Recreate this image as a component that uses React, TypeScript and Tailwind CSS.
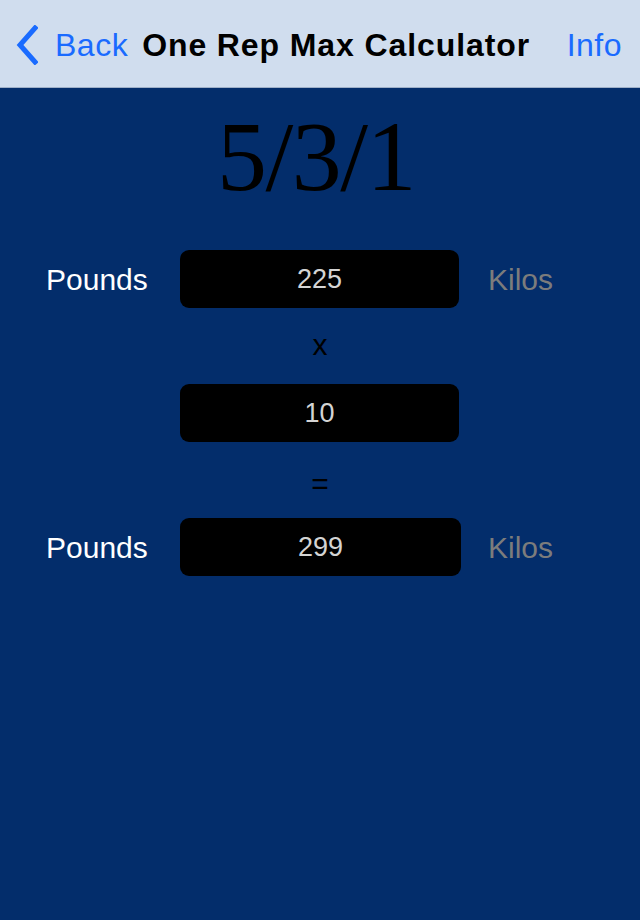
export default function App() {
  const font = { fontFamily: '"Liberation Sans", Arial, sans-serif' };
  return (
    <div className="flex h-[920px] w-[640px] flex-col bg-[#032d6b]" style={font}>
      <header className="flex h-[88px] shrink-0 items-center border-b border-[#9fb0c8] bg-[#d0ddee] pl-[16px] pr-[18px] pt-[3px]">
        <svg viewBox="0 0 22 40" className="h-[40px] w-[22px]" fill="none" stroke="#1a6bff" strokeWidth="5" strokeLinecap="square">
          <path d="M19 3 L4 20 L19 37" />
        </svg>
        <span className="ml-[17px] text-[32px] tracking-[0.5px] text-[#1a6bff]">Back</span>
        <span className="ml-[14px] text-[32px] font-bold tracking-[0.9px] text-black">One Rep Max Calculator</span>
        <span className="ml-auto text-[32px] tracking-[0.5px] text-[#1a6bff]">Info</span>
      </header>

      <div
        className="mt-[19px] pr-[8px] text-center text-[100px] leading-none tracking-[-1.5px] text-black"
        style={{ fontFamily: '"Liberation Serif", "Times New Roman", serif' }}
      >
        5/3/1
      </div>

      <div className="mt-[43px] flex flex-col">
        <Row label value="225" />
        <div className="flex h-[76px] items-center justify-center pb-[4px] text-[30px] text-black">x</div>
        <Row value="10" />
        <div className="flex h-[76px] items-center justify-center pt-[6px] text-[30px] text-black">=</div>
        <Row label value="299" wide />
      </div>
    </div>
  );
}

function Row({ label = false, value, wide = false }: { label?: boolean; value: string; wide?: boolean }) {
  return (
    <div className="flex h-[58px] items-center pl-[46px]">
      <span className="w-[134px] text-[30px] text-white">{label ? "Pounds" : ""}</span>
      <div className={`flex h-[58px] items-center justify-center rounded-[9px] bg-black text-[27px] text-[#d4d4d4] ${wide ? "w-[281px]" : "w-[279px]"}`}>
        {value}
      </div>
      {label && <span className={`text-[30px] text-[#7c7c7c] ${wide ? "ml-[27px]" : "ml-[29px]"}`}>Kilos</span>}
    </div>
  );
}
